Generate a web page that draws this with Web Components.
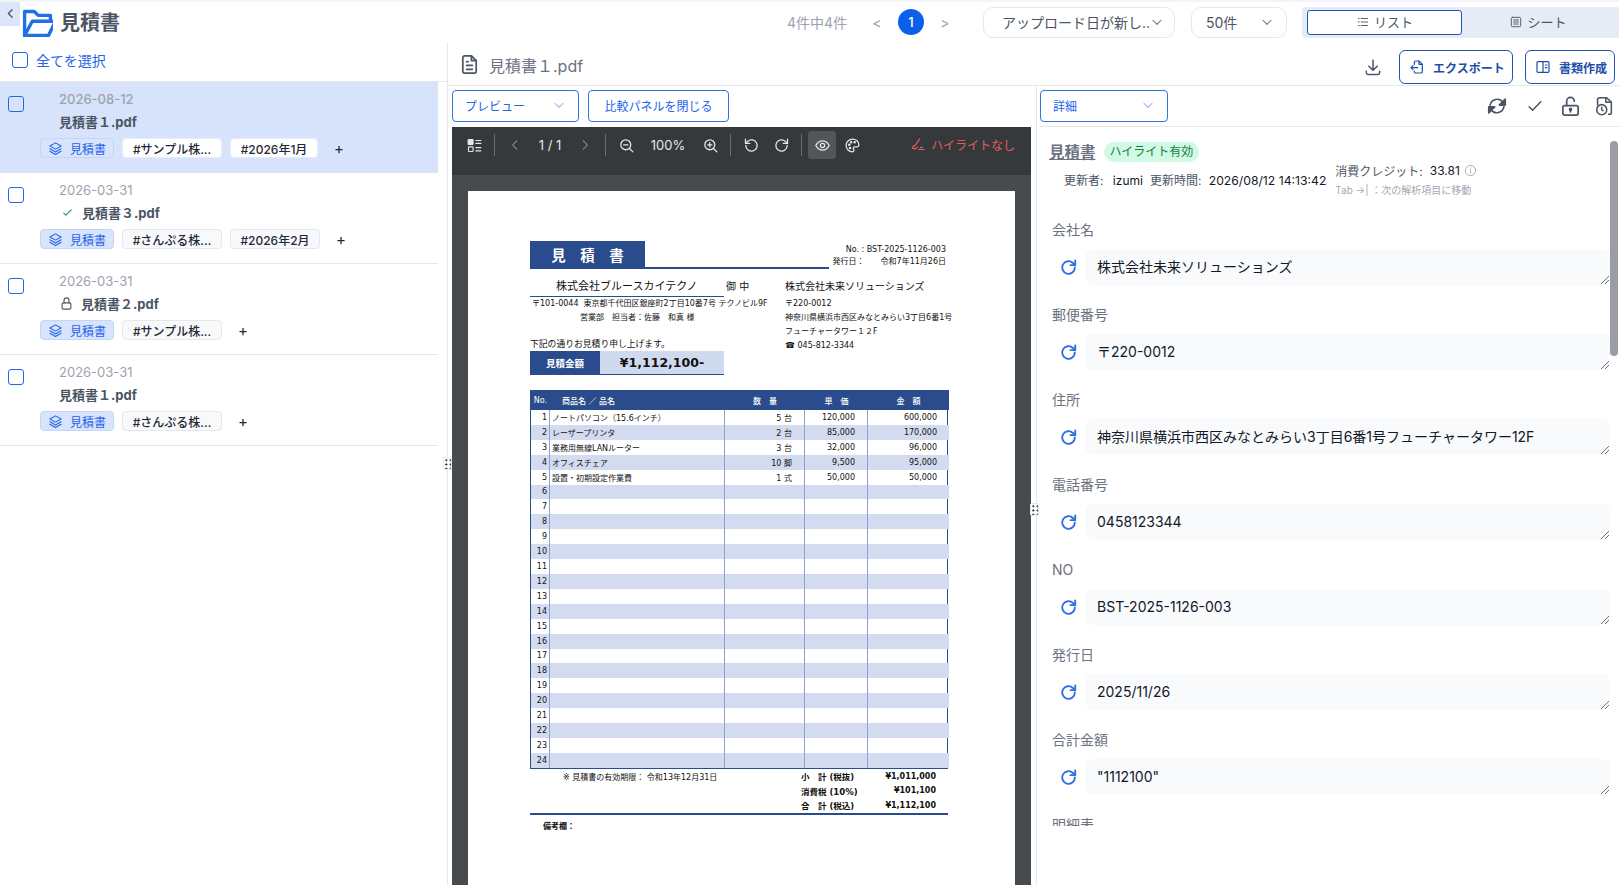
<!DOCTYPE html>
<html lang="ja">
<head>
<meta charset="utf-8">
<title>見積書</title>
<style>
    html, body { margin: 0; height: 100%; overflow: hidden; background: #fff; }
    body { font-family: Inter, "Noto Sans CJK JP", sans-serif; color: #111827; }
</style>
</head>
<body>
<app-root></app-root>
<script>
const FONT = 'Inter, "Noto Sans CJK JP", sans-serif';

const ICONS = {
    'chev-left': '<path d="M15 5l-7 7 7 7"/>',
    'chev-right': '<path d="M9 5l7 7-7 7"/>',
    'chev-down': '<path d="M5 9l7 7 7-7"/>',
    folder: '<path d="M2 22V3.500h7.500l3 3H22v4"/><path d="M2 22h18.500L26 11H8L2 22z"/>',
    layers: '<path d="M12 3 3 8l9 5 9-5-9-5z"/><path d="M3 12.500l9 5 9-5"/><path d="M3 16.500l9 5 9-5"/>',
    check: '<path d="M5 13l4 4L19 7"/>',
    lock: '<rect x="5" y="11" width="14" height="10" rx="2"/><path d="M8 11V7a4 4 0 0 1 8 0v4"/>',
    unlock: '<rect x="4" y="11" width="16" height="10" rx="2"/><path d="M8 11V6.500a4 4 0 0 1 8 0"/><path d="M12 15v2.500"/><circle cx="12" cy="15" r="1"/>',
    file: '<path d="M14 3H7a2 2 0 0 0-2 2v14a2 2 0 0 0 2 2h10a2 2 0 0 0 2-2V8z"/><path d="M14 3v5h5"/><path d="M9 9h1.500M9 13h6M9 17h6"/>',
    list: '<path d="M9 6h11M9 12h11M9 18h11M4 6h1.500M4 12h1.500M4 18h1.500"/>',
    sheet: '<rect x="4" y="4" width="16" height="16" rx="2"/><path d="M8 8.500h8M8 12h8M8 15.500h8"/>',
    download: '<path d="M12 4v11M7 11l5 5 5-5"/><path d="M4 17v2a2 2 0 0 0 2 2h12a2 2 0 0 0 2-2v-2"/>',
    export: '<path d="M8 8V5a2 2 0 0 1 2-2h5l5 5v11a2 2 0 0 1-2 2h-8a2 2 0 0 1-2-2v-1"/><path d="M15 3v5h5"/><path d="M13 13H3M6 10l-3 3 3 3"/>',
    book: '<rect x="3" y="4" width="18" height="16" rx="1.500"/><path d="M12 4v16M15.500 9H18M15.500 13H18"/>',
    sync: '<path d="M4.500 11a7.800 7.800 0 0 1 14-3l1.500 2"/><path d="M21 4.500V11h-6.500z" fill="currentColor"/><path d="M19.500 13a7.800 7.800 0 0 1-14 3L4 14"/><path d="M3 19.500V13h6.500z" fill="currentColor"/>',
    'file-clock': '<path d="M9 3h6l5 5v11a2 2 0 0 1-2 2h-1"/><path d="M14 3v5h6"/><path d="M5 11V5a2 2 0 0 1 2-2h2"/><circle cx="9.500" cy="16" r="5.500"/><path d="M9.500 13.500V16l1.500 1"/>',
    refresh: '<path d="M20 12a8 8 0 1 1-2.400-5.700L20 8.700"/><path d="M20.500 3v6h-6"/>',
    'zoom-out': '<circle cx="11" cy="11" r="7"/><path d="M8 11h6M16.500 16.500 21 21"/>',
    'zoom-in': '<circle cx="11" cy="11" r="7"/><path d="M8 11h6M11 8v6M16.500 16.500 21 21"/>',
    'rotate-left': '<path d="M4 12a8 8 0 1 0 2.400-5.700L4 8.700"/><path d="M3.500 3v6h6"/>',
    'rotate-right': '<path d="M20 12a8 8 0 1 1-2.400-5.700L20 8.700"/><path d="M20.500 3v6h-6"/>',
    eye: '<path d="M2.500 12S6 5.500 12 5.500 21.500 12 21.500 12 18 18.500 12 18.500 2.500 12 2.500 12z"/><circle cx="12" cy="12" r="3"/>',
    palette: '<path d="M12 3a9 9 0 1 0 0 18c1.500 0 2-1 2-2 0-1.500-1-2-1-3s1-2 2.500-2H18a3 3 0 0 0 3-3c0-4.500-4-8-9-8z"/><circle cx="7.500" cy="11" r="1" fill="currentColor"/><circle cx="10" cy="7.500" r="1" fill="currentColor"/><circle cx="15" cy="7.500" r="1" fill="currentColor"/><circle cx="8.500" cy="15.500" r="1" fill="currentColor"/>',
    pen: '<path d="M14 3 7 13c-3 1-4.500 3-4.500 5.500 3 1 6 .5 7.500-2.500"/><path d="M12 20h9"/><path d="M15 17c1-1 2-1 3 0"/>',
    info: '<circle cx="12" cy="12" r="9.500"/><path d="M12 11v6M12 7v1"/>',
    'grid-list': '<rect x="3" y="3.500" width="7" height="7" rx="1" fill="currentColor"/><rect x="3.500" y="14" width="6.500" height="6.500" rx="1"/><path d="M14 5h7M14 9h7M14 15h7M14 19.500h7"/>'
};

/**
 * Inline icon, drawn from the ICONS table
 */
class UiIcon extends HTMLElement {
    constructor() {
        super();
        const name = this.getAttribute('name');
        const size = this.getAttribute('size') || 16;
        const weight = this.getAttribute('weight') || 2;
        const root = this.attachShadow({mode: 'open'});
        root.innerHTML = `
            <style>
                :host { display: inline-flex; flex: none; line-height: 0; }
            </style>
            <svg xmlns="http://www.w3.org/2000/svg" width="${size}" height="${size}" viewBox="0 0 24 24" fill="none"
                stroke="currentColor" stroke-width="${weight}" stroke-linecap="round" stroke-linejoin="round">${ICONS[name]}</svg>`;
    }
}

/**
 * Select look-alike. The variant attribute picks the gray or the blue one
 */
class SelectBox extends HTMLElement {
    constructor() {
        super();
        const root = this.attachShadow({mode: 'open'});
        root.innerHTML = `
            <style>
                :host {
                    display: flex;
                    align-items: center;
                    justify-content: space-between;
                    box-sizing: border-box;
                    height: 32px;
                    padding: 0 12px 2px;
                    background: #fff;
                    font-size: 12px;
                    color: #2563eb;
                    border: 1px solid #2f74de;
                    border-radius: 4px;
                    flex: none;
                }
                :host([variant="gray"]) {
                    height: 31px;
                    font-size: 14px;
                    color: #4b5563;
                    border-color: #e5e7eb;
                    border-radius: 10px;
                    padding: 0 12px 0 18px;
                }
                ui-icon { color: #93b4e8; }
                :host([variant="gray"]) ui-icon { color: #6b7280; }
                span { white-space: nowrap; }
            </style>
            <span><slot></slot></span>
            <ui-icon name="chev-down" size="14" weight="1.8"></ui-icon>`;
    }
}

class TopBar extends HTMLElement {
    constructor() {
        super();
        const root = this.attachShadow({mode: 'open'});
        root.innerHTML = `
            <style>
                :host {
                    display: flex;
                    align-items: center;
                    box-sizing: border-box;
                    height: 42px;
                    border-top: 2px solid #f3f5fb;
                    flex: none;
                }
                .back {
                    align-self: flex-start;
                    width: 20px;
                    height: 24px;
                    background: #dbe6fb;
                    color: #4b5563;
                    display: flex;
                    align-items: center;
                    justify-content: center;
                    padding-bottom: 2px;
                    box-sizing: border-box;
                }
                .logo { color: #1f6fe5; margin: 1px 0 0 2px; }
                h1 { margin: -1px 0 0 7px; font-size: 20px; font-weight: 700; color: #4b5563; }
                .count { margin-left: auto; font-size: 14px; color: #9ca3af; }
                .pg { width: 20px; text-align: center; font-size: 14px; color: #9ca3af; }
                .prev { margin-left: 20px; }
                .num {
                    width: 26px; height: 26px; margin: 0 11px; border-radius: 50%;
                    background: #0b5fe8; color: #fff; font-size: 13px; font-weight: 500;
                    display: flex; align-items: center; justify-content: center;
                }
                .sort { width: 192px; margin-left: 28px; padding-right: 14px; }
                .size { width: 96px; margin-left: 16px; padding-left: 14px; }
                .seg {
                    display: grid; grid-template-columns: 155px 1fr; width: 317px; height: 31px; margin-left: 15px;
                    box-sizing: border-box; padding: 3px 5px; background: #e6ebf5; border-radius: 4px 0 0 4px;
                }
                .seg div {
                    display: flex; align-items: center; justify-content: center; gap: 4px;
                    font-size: 13px; line-height: 22px; color: #4b5563; box-sizing: border-box; padding-bottom: 1px;
                }
                .seg .on { background: #fff; border: 1px solid #1d56b5; border-radius: 3px; }
            </style>
            <div class="back"><ui-icon name="chev-left" size="13" weight="2.4"></ui-icon></div>
            <ui-icon class="logo" name="folder" size="31" weight="2.600"></ui-icon>
            <h1>見積書</h1>
            <span class="count">4件中4件</span>
            <span class="pg prev">&lt;</span>
            <span class="num">1</span>
            <span class="pg">&gt;</span>
            <select-box class="sort" variant="gray">アップロード日が新し..</select-box>
            <select-box class="size" variant="gray">50件</select-box>
            <div class="seg">
                <div class="on"><ui-icon name="list" size="14" weight="1.600"></ui-icon>リスト</div>
                <div><ui-icon name="sheet" size="14" weight="1.600"></ui-icon>シート</div>
            </div>`;
    }
}

/**
 * Small tag of a file row
 */
class TagChip extends HTMLElement {
    constructor() {
        super();
        const root = this.attachShadow({mode: 'open'});
        root.innerHTML = `
            <style>
                :host {
                    display: inline-flex;
                    align-items: center;
                    justify-content: center;
                    box-sizing: border-box;
                    height: 20px;
                    padding: 0 8px;
                    font-size: 12px;
                    font-weight: 500;
                    color: #1f2937;
                    background: #f8f9fb;
                    border: 1px solid #e5e7eb;
                    border-radius: 4px;
                    white-space: nowrap;
                    flex: none;
                }
                :host([active]) { background: #fff; border-color: #e7ecf7; }
                :host([type]) { gap: 7px; color: #2563eb; background: #d7e4fb; border-color: #c5d6f5; font-weight: 400; }
            </style>
            <slot></slot>`;
    }
}

/**
 * One file of the list
 */
class FileItem extends HTMLElement {
    constructor() {
        super();
        const status = this.getAttribute('status') || '';
        const date = this.getAttribute('date');
        const name = this.getAttribute('name');
        const active = this.hasAttribute('active') ? 'active' : '';
        const widths = (this.getAttribute('widths') || '100,88').split(',');
        const tags = (this.getAttribute('tags') || '').split(',');
        let mark = '';
        if (status === 'check') {
            mark = '<ui-icon class="mark ok" name="check" size="13" weight="2"></ui-icon>';
        } else if (status === 'lock') {
            mark = '<ui-icon class="mark" name="lock" size="15" weight="1.800"></ui-icon>';
        }
        const chips = tags.map((t, i) => `<tag-chip ${active} style="width:${widths[i]}px">${t}</tag-chip>`).join('');
        const root = this.attachShadow({mode: 'open'});
        root.innerHTML = `
            <style>
                :host {
                    display: flex;
                    flex-direction: column;
                    box-sizing: border-box;
                    width: 438px;
                    height: 91px;
                    padding: 8px 0 0 8px;
                    border-bottom: 1px solid #e5e7eb;
                }
                :host([active]) { background: #d7e3fa; border-bottom-color: #d7e3fa; }
                .top { display: flex; height: 48px; }
                .box { width: 16px; height: 16px; margin-top: 6px; box-sizing: border-box; border: 1.500px solid #2563eb; border-radius: 3px; }
                .txt { margin-left: 35px; }
                .date { font-size: 13px; line-height: 18px; color: #9ca3af; }
                :host([active]) .date { font-weight: 500; }
                .name { display: flex; align-items: center; margin-top: 3px; height: 20px; font-size: 13px; font-weight: 700; color: #4b5563; }
                .mark { color: #4b5563; margin-right: 7px; }
                .mark.ok { color: #16a34a; margin: 0 8px 0 2px; }
                .tags { display: flex; align-items: center; gap: 8px; margin-left: 32px; }
                .plus { margin-left: 8px; font-size: 15px; color: #1f2937; }
            </style>
            <div class="top">
                <div class="box"></div>
                <div class="txt">
                    <div class="date">${date}</div>
                    <div class="name">${mark}${name}</div>
                </div>
            </div>
            <div class="tags">
                <tag-chip type style="width:74px"><ui-icon name="layers" size="15" weight="1.700"></ui-icon>見積書</tag-chip>
                ${chips}
                <span class="plus">+</span>
            </div>`;
    }
}

class FilePanel extends HTMLElement {
    constructor() {
        super();
        const root = this.attachShadow({mode: 'open'});
        root.innerHTML = `
            <style>
                :host {
                    display: block;
                    position: relative;
                    box-sizing: border-box;
                    width: 448px;
                    border-right: 1px solid #e5e7eb;
                    flex: none;
                }
                .all {
                    display: flex;
                    align-items: center;
                    gap: 8px;
                    box-sizing: border-box;
                    height: 40px;
                    padding: 0 0 4px 12px;
                    font-size: 14px;
                    color: #2563eb;
                    border-bottom: 1px solid #e5e7eb;
                }
                .box { width: 16px; height: 16px; box-sizing: border-box; border: 1.500px solid #2563eb; border-radius: 3px; }
                .grip {
                    position: absolute; right: -5px; top: 415px; width: 9px; height: 13px; z-index: 2;
                    background: #fff radial-gradient(circle, #374151 1px, transparent 1.200px) 0 0 / 4.500px 4.300px;
                    border: 1px solid #e5e7eb; box-sizing: border-box; border-radius: 2px;
                }
            </style>
            <div class="all"><div class="box"></div>全てを選択</div>
            <file-item active date="2026-08-12" name="見積書１.pdf" tags="#サンプル株...,#2026年1月" widths="100,88"></file-item>
            <file-item date="2026-03-31" status="check" name="見積書３.pdf" tags="#さんぷる株...,#2026年2月" widths="100,90"></file-item>
            <file-item date="2026-03-31" status="lock" name="見積書２.pdf" tags="#サンプル株..." widths="100"></file-item>
            <file-item date="2026-03-31" name="見積書１.pdf" tags="#さんぷる株..." widths="100"></file-item>
            <div class="grip"></div>`;
    }
}

class DocHead extends HTMLElement {
    constructor() {
        super();
        const root = this.attachShadow({mode: 'open'});
        root.innerHTML = `
            <style>
                :host {
                    display: flex;
                    align-items: center;
                    box-sizing: border-box;
                    height: 44px;
                    padding: 2px 4px 0 10px;
                    border-bottom: 1px solid #e5e7eb;
                    color: #4b5563;
                    flex: none;
                }
                .name { margin-left: 8px; font-size: 16px; color: #6b7280; }
                .dl { margin-left: auto; margin-right: 16px; margin-top: 4px; }
                button {
                    display: flex; align-items: center; gap: 8px;
                    height: 34px; box-sizing: border-box; padding: 0 0 0 9px; margin-top: 5px;
                    font: 700 12px ${FONT};
                    white-space: nowrap;
                    color: #1d4fa8; background: #fff;
                    border: 1px solid #1d56b5; border-radius: 6px;
                }
                .exp { width: 114px; }
                .mk { width: 90px; margin-left: 12px; }
            </style>
            <ui-icon name="file" size="23" weight="1.800"></ui-icon>
            <span class="name">見積書１.pdf</span>
            <ui-icon class="dl" name="download" size="20" weight="1.800"></ui-icon>
            <button class="exp"><ui-icon name="export" size="16" weight="1.800"></ui-icon>エクスポート</button>
            <button class="mk"><ui-icon name="book" size="16" weight="1.800"></ui-icon>書類作成</button>`;
    }
}

class ViewerToolbar extends HTMLElement {
    constructor() {
        super();
        const root = this.attachShadow({mode: 'open'});
        root.innerHTML = `
            <style>
                :host {
                    display: flex;
                    align-items: flex-start;
                    box-sizing: border-box;
                    height: 48px;
                    padding: 4px 16px 0 8px;
                    background: #36393c;
                    color: #e5e7eb;
                    flex: none;
                }
                .b { width: 28px; height: 28px; display: flex; align-items: center; justify-content: center; flex: none; }
                .dim { color: #8b8f94; }
                .sep { width: 1px; height: 22px; margin: 3px 6px 0; background: #6b6f73; flex: none; }
                .t { display: flex; align-items: center; justify-content: center; height: 28px; font-size: 13px; }
                .pages { width: 42px; }
                .zoom { width: 56px; }
                .on { background: #52565a; border-radius: 3px; }
                .gap { margin-left: 2px; }
                .hl { display: flex; align-items: center; gap: 5px; margin-left: auto; height: 26px; font-size: 12px; color: #e25f5c; }
            </style>
            <div class="b"><ui-icon name="grid-list" size="17" weight="1.600"></ui-icon></div>
            <div class="sep"></div>
            <div class="b dim"><ui-icon name="chev-left" size="14" weight="1.800"></ui-icon></div>
            <div class="t pages">1 / 1</div>
            <div class="b dim"><ui-icon name="chev-right" size="14" weight="1.800"></ui-icon></div>
            <div class="sep"></div>
            <div class="b"><ui-icon name="zoom-out" size="17" weight="1.800"></ui-icon></div>
            <div class="t zoom">100%</div>
            <div class="b"><ui-icon name="zoom-in" size="17" weight="1.800"></ui-icon></div>
            <div class="sep"></div>
            <div class="b"><ui-icon name="rotate-left" size="17" weight="1.800"></ui-icon></div>
            <div class="b gap"><ui-icon name="rotate-right" size="17" weight="1.800"></ui-icon></div>
            <div class="sep"></div>
            <div class="b on"><ui-icon name="eye" size="17" weight="1.800"></ui-icon></div>
            <div class="b gap"><ui-icon name="palette" size="17" weight="1.700"></ui-icon></div>
            <div class="hl"><ui-icon name="pen" size="15" weight="1.800"></ui-icon>ハイライトなし</div>`;
    }
}

/**
 * The estimate sheet shown in the viewer
 */
class PdfPage extends HTMLElement {
    constructor() {
        super();
        const root = this.attachShadow({mode: 'open'});
        root.innerHTML = `
            ${this.buildStyle()}
            <div class="head">
                <div class="title"><b>見　積　書</b></div>
                <div class="no">No. : BST-2025-1126-003<br>発行日：　　令和7年11月26日</div>
            </div>
            <div class="parties">
                <div class="left">
                    <div class="to"><span class="co">株式会社ブルースカイテクノ</span><span class="on">御 中</span></div>
                    <div class="l">〒101-0044&nbsp; 東京都千代田区銀座町2丁目10番7号 テクノビル9F</div>
                    <div class="l ind">営業部　担当者：佐藤　和真 様</div>
                    <div class="l note">下記の通りお見積り申し上げます。</div>
                    <div class="sum"><span class="k">見積金額</span><span class="v">¥1,112,100-</span></div>
                </div>
                <div class="right">
                    <div class="co2">株式会社未来ソリューションズ</div>
                    <div class="l">〒220-0012</div>
                    <div class="l">神奈川県横浜市西区みなとみらい3丁目6番1号</div>
                    <div class="l">フューチャータワー１２F</div>
                    <div class="l">☎ 045-812-3344</div>
                </div>
            </div>
            <div class="table">
                <div class="hd c">No.</div><div class="hd name">商品名 ／ 品名</div><div class="hd c">数　量</div><div class="hd c">単　価</div><div class="hd c">金　額</div>
                ${this.buildRows()}
            </div>
            <div class="totals">
                <div class="valid">※ 見積書の有効期限： 令和13年12月31日</div>
                <b class="lb">小　計 (税抜)</b><b class="val">¥1,011,000</b>
                <b class="lb">消費税 (10%)</b><b class="val">¥101,100</b>
                <b class="lb">合　計 (税込)</b><b class="val">¥1,112,100</b>
            </div>
            <div class="memo"><b>備考欄：</b></div>`;
    }

    buildStyle() {
        return `
            <style>
                :host {
                    display: block;
                    box-sizing: border-box;
                    width: 547px;
                    height: 720px;
                    margin: 16px 0 0 16px;
                    padding: 50px 67px 0 62px;
                    background: #fff;
                    color: #111;
                    font-family: "DejaVu Sans", "Noto Sans CJK JP", sans-serif;
                    font-size: 8px;
                    flex: none;
                }
                .head { display: flex; align-items: flex-end; height: 28px; }
                .title { width: 299px; height: 28px; box-sizing: border-box; border-bottom: 2px solid #2b4c8c; flex: none; }
                .title b { display: flex; align-items: center; justify-content: center; width: 115px; height: 27px; background: #2b4c8c; color: #fff; font-size: 14.500px; }
                .no { flex: 1; text-align: right; line-height: 11.500px; padding-right: 2px; margin-bottom: 2px; white-space: nowrap; }
                .parties { display: flex; margin-top: 9px; }
                .left { width: 255px; flex: none; }
                .to { display: flex; height: 19px; line-height: 18px; }
                .co { width: 194px; box-sizing: border-box; padding-left: 26px; border-bottom: 1.500px solid #2b4c8c; font-size: 11px; white-space: nowrap; }
                .on { margin-left: 2px; font-size: 10px; }
                .co2 { height: 19px; line-height: 18px; font-size: 10px; white-space: nowrap; }
                .l { height: 14px; line-height: 14px; white-space: nowrap; }
                .left .l:nth-child(2) { padding-left: 2px; }
                .ind { padding-left: 50px; }
                .note { margin-top: 12px; font-size: 8.800px; }
                .sum { display: flex; width: 194px; height: 24px; background: #d0daee; border-bottom: 1.500px solid #2b4c8c; box-sizing: border-box; }
                .k { width: 70px; background: #2b4c8c; color: #fff; font-size: 9.500px; font-weight: 700; display: flex; align-items: center; justify-content: center; }
                .v { flex: 1; display: flex; align-items: center; justify-content: center; font: 700 12.500px "DejaVu Sans", sans-serif; }
                .table {
                    display: grid;
                    grid-template-columns: 19px 175px 80px 63px 81px;
                    grid-template-rows: 20px repeat(24, 14.920px);
                    width: 418px;
                    margin-top: 15px;
                    box-sizing: border-box;
                    border-left: 1px solid #2b4c8c;
                    border-right: 1px solid #2b4c8c;
                    border-bottom: 1px solid #2b4c8c;
                }
                .hd { background: #2b4c8c; color: #fff; display: flex; align-items: center; font-size: 8px; font-weight: 500; }
                .hd.c { justify-content: center; }
                .hd.name { padding-left: 12px; }
                .cell { display: flex; align-items: center; box-sizing: border-box; border-right: 1px solid #8ea2cf; white-space: nowrap; padding: 0 2px; }
                .cell.last { border-right: 0; }
                .odd { background: #d2dbef; }
                .r { justify-content: flex-end; }
                .pad { padding-right: 12px; }
                .totals {
                    display: grid;
                    grid-template-columns: 271px 70px 65px;
                    grid-auto-rows: 14.600px;
                    align-items: center;
                    width: 418px;
                    height: 46px;
                    box-sizing: border-box;
                    border-bottom: 2px solid #2b4c8c;
                }
                .valid { padding-left: 33px; grid-row: 1; }
                .lb { grid-column: 2; font-size: 8.500px; }
                .val { grid-column: 3; text-align: right; }
                .memo { padding: 5px 0 0 13px; font-size: 8px; }
            </style>`;
    }

    buildRows() {
        const rows = [
            ['ノートパソコン（15.6インチ）', '5 台', '120,000', '600,000'],
            ['レーザープリンタ', '2 台', '85,000', '170,000'],
            ['業務用無線LANルーター', '3 台', '32,000', '96,000'],
            ['オフィスチェア', '10 脚', '9,500', '95,000'],
            ['設置・初期設定作業費', '1 式', '50,000', '50,000']
        ];
        let result = '';
        for (let i = 0; i < 24; i++) {
            const row = rows[i] || ['', '', '', ''];
            const odd = i % 2 ? 'odd' : '';
            result += `<div class="cell r ${odd}">${i + 1}</div>
                <div class="cell ${odd}">${row[0]}</div>
                <div class="cell r pad ${odd}">${row[1]}</div>
                <div class="cell r pad ${odd}">${row[2]}</div>
                <div class="cell r pad last ${odd}">${row[3]}</div>`;
        }
        return result;
    }
}

class PreviewPane extends HTMLElement {
    constructor() {
        super();
        const root = this.attachShadow({mode: 'open'});
        root.innerHTML = `
            <style>
                :host {
                    display: flex;
                    flex-direction: column;
                    box-sizing: border-box;
                    width: 580px;
                    margin-left: 4px;
                    flex: none;
                    min-height: 0;
                }
                .bar { display: flex; gap: 9px; height: 41px; padding-top: 4px; box-sizing: border-box; flex: none; }
                .bar select-box { width: 127px; }
                .close {
                    height: 32px; width: 141px; box-sizing: border-box; padding: 0 0 2px;
                    font: 400 12px ${FONT}; color: #2563eb; background: #fff;
                    border: 1px solid #2f74de; border-radius: 4px;
                }
                .viewer { flex: 1; display: flex; flex-direction: column; min-height: 0; overflow: hidden; background: #484b4e; width: 579px; }
            </style>
            <div class="bar">
                <select-box>プレビュー</select-box>
                <button class="close">比較パネルを閉じる</button>
            </div>
            <div class="viewer">
                <viewer-toolbar></viewer-toolbar>
                <pdf-page></pdf-page>
            </div>`;
    }
}

/**
 * A label with its editable value
 */
class FieldRow extends HTMLElement {
    constructor() {
        super();
        const label = this.getAttribute('label');
        const value = this.getAttribute('value');
        const root = this.attachShadow({mode: 'open'});
        root.innerHTML = `
            <style>
                :host { display: block; height: 85px; box-sizing: border-box; }
                .label { padding-left: 12px; height: 20px; line-height: 20px; font-size: 14px; color: #6b7280; }
                .row { display: flex; align-items: center; margin-top: 9px; }
                .re { width: 45px; padding-left: 19px; box-sizing: border-box; color: #2f6fe0; flex: none; display: flex; }
                .val {
                    position: relative;
                    flex: none;
                    width: 525px;
                    height: 36px;
                    box-sizing: border-box;
                    padding: 0 12px;
                    line-height: 35px;
                    font-size: 14px;
                    color: #111827;
                    background: #f9fafc;
                    border-radius: 8px;
                    white-space: nowrap;
                }
                .val::after {
                    content: "";
                    position: absolute;
                    right: 1px;
                    bottom: 1px;
                    width: 8px;
                    height: 8px;
                    background: linear-gradient(135deg, transparent 45%, #6b7280 45%, #6b7280 55%, transparent 55%, transparent 70%, #6b7280 70%, #6b7280 80%, transparent 80%);
                }
            </style>
            <div class="label">${label}</div>
            <div class="row">
                <div class="re"><ui-icon name="refresh" size="19" weight="2.400"></ui-icon></div>
                <div class="val">${value}</div>
            </div>`;
    }
}

class DetailPane extends HTMLElement {
    constructor() {
        super();
        const root = this.attachShadow({mode: 'open'});
        root.innerHTML = `
            <style>
                :host {
                    display: flex;
                    flex-direction: column;
                    position: relative;
                    flex: 1;
                    min-width: 0;
                    margin-left: 4px;
                    border-left: 1px solid #e5e7eb;
                    padding-left: 3px;
                    min-height: 0;
                }
                .bar { display: flex; align-items: flex-start; height: 41px; box-sizing: border-box; padding-top: 4px; border-bottom: 1px solid #e5e7eb; flex: none; color: #4b5563; }
                .bar select-box { width: 128px; }
                .bar .tools { display: flex; align-items: center; height: 32px; margin-left: auto; margin-right: 4px; }
                .tools .s2 { margin-left: 17px; }
                .tools .s3 { margin-left: 14px; }
                .tools .s4 { margin-left: 11px; }
                .info { height: 91px; box-sizing: border-box; padding: 13px 0 0 9px; flex: none; }
                .line { display: flex; align-items: center; gap: 8px; height: 22px; }
                h2 { margin: 0; font-size: 15.500px; font-weight: 700; color: #6b7280; text-decoration: underline; }
                .ok { padding: 0 6px; height: 20px; line-height: 20px; font-size: 12px; color: #15803d; background: #d1fae5; border-radius: 10px; margin-top: 1px; }
                .meta { display: flex; font-size: 12px; color: #4b5563; padding-left: 15px; }
                .meta i { font-style: normal; color: #111827; margin-left: 6px; }
                .meta i.t { margin-left: 4px; font-size: 12.200px; }
                .when { margin-left: 7px; }
                .credit { margin-left: 9px; margin-top: -1px; }
                .c1 { display: flex; align-items: center; height: 18px; white-space: nowrap; }
                .meta .c1 i { margin-left: 7px; }
                .c1 ui-icon { margin-left: 4px; color: #9ca3af; }
                .hint { height: 16px; line-height: 16px; font-size: 10px; color: #a3a8b1; white-space: nowrap; margin-top: 3px; }
                .upd { margin-top: 9px; white-space: nowrap; }
                .fields { flex: none; height: 608px; overflow: hidden; padding-top: 2px; box-sizing: border-box; }
                .thumb { position: absolute; right: 1px; top: 55px; width: 8px; height: 215px; background: #9a9ea4; border-radius: 4px; }
                .grip {
                    position: absolute; left: -7px; top: 417px; width: 9px; height: 13px; z-index: 2;
                    background: #fff radial-gradient(circle, #374151 1px, transparent 1.200px) 0 0 / 4.500px 4.300px;
                    border: 1px solid #e5e7eb; box-sizing: border-box; border-radius: 2px;
                }
            </style>
            <div class="bar">
                <select-box>詳細</select-box>
                <div class="tools">
                    <ui-icon name="sync" size="22" weight="1.800"></ui-icon>
                    <ui-icon class="s2" name="check" size="20" weight="1.800"></ui-icon>
                    <ui-icon class="s3" name="unlock" size="23" weight="1.800"></ui-icon>
                    <ui-icon class="s4" name="file-clock" size="22" weight="1.700"></ui-icon>
                </div>
            </div>
            <div class="info">
                <div class="line"><h2>見積書</h2><span class="ok">ハイライト有効</span></div>
                <div class="meta">
                    <div class="upd">更新者: <i>izumi</i><span class="when">更新時間: </span><i class="t">2026/08/12 14:13:42</i></div>
                    <div class="credit">
                        <div class="c1">消費クレジット: <i>33.81</i><ui-icon name="info" size="13" weight="1.600"></ui-icon></div>
                        <div class="hint">Tab →| ：次の解析項目に移動</div>
                    </div>
                </div>
            </div>
            <div class="fields">
                <field-row label="会社名" value="株式会社未来ソリューションズ"></field-row>
                <field-row label="郵便番号" value="〒220-0012"></field-row>
                <field-row label="住所" value="神奈川県横浜市西区みなとみらい3丁目6番1号フューチャータワー12F"></field-row>
                <field-row label="電話番号" value="0458123344"></field-row>
                <field-row label="NO" value="BST-2025-1126-003"></field-row>
                <field-row label="発行日" value="2025/11/26"></field-row>
                <field-row label="合計金額" value="&quot;1112100&quot;"></field-row>
                <field-row label="明細表" value=""></field-row>
            </div>
            <div class="thumb"></div>
            <div class="grip"></div>`;
    }
}

class AppRoot extends HTMLElement {
    constructor() {
        super();
        const root = this.attachShadow({mode: 'open'});
        root.innerHTML = `
            <style>
                :host { display: flex; flex-direction: column; height: 885px; overflow: hidden; font-family: ${FONT}; }
                main { flex: 1; display: flex; min-height: 0; }
                .work { flex: 1; display: flex; flex-direction: column; min-width: 0; }
                .panes { flex: 1; display: flex; min-height: 0; }
            </style>
            <top-bar></top-bar>
            <main>
                <file-panel></file-panel>
                <div class="work">
                    <doc-head></doc-head>
                    <div class="panes">
                        <preview-pane></preview-pane>
                        <detail-pane></detail-pane>
                    </div>
                </div>
            </main>`;
    }
}

customElements.define('ui-icon', UiIcon);
customElements.define('select-box', SelectBox);
customElements.define('top-bar', TopBar);
customElements.define('tag-chip', TagChip);
customElements.define('file-item', FileItem);
customElements.define('file-panel', FilePanel);
customElements.define('doc-head', DocHead);
customElements.define('viewer-toolbar', ViewerToolbar);
customElements.define('pdf-page', PdfPage);
customElements.define('preview-pane', PreviewPane);
customElements.define('field-row', FieldRow);
customElements.define('detail-pane', DetailPane);
customElements.define('app-root', AppRoot);
</script>
</body>
</html>
